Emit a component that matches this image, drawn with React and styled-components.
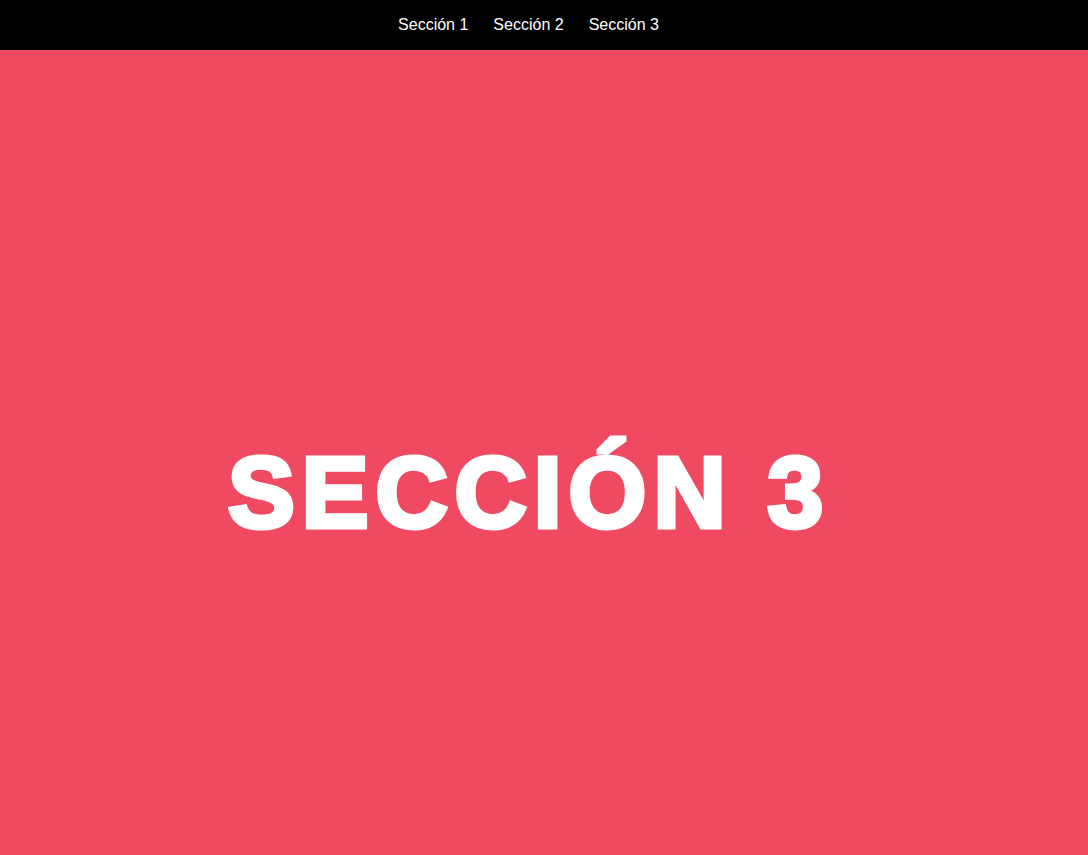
import React from 'react'
import styled, { createGlobalStyle } from 'styled-components'

const GlobalStyle = createGlobalStyle`
  html, body {
    margin: 0;
    padding: 0;
    font-family: "Liberation Sans", Arial, sans-serif;
    overflow: hidden;
  }
`

const Page = styled.div`
  display: flex;
  flex-direction: column;
  height: 100vh;
  background-color: #f04a62;
`

const Header = styled.nav`
  height: 50px;
  flex-shrink: 0;
  background-color: #000;
  display: flex;
  justify-content: center;
  align-items: center;
  padding-right: 31px;
`

const NavLink = styled.a`
  color: #fff;
  font-size: 16px;
  text-decoration: none;
  padding: 0 12.5px;
  cursor: pointer;
`

const Section = styled.section`
  flex: 1;
  display: flex;
  justify-content: center;
  align-items: center;
  padding-top: 79px;
  padding-right: 30px;
`

const Title = styled.h1`
  margin: 0;
  color: #fff;
  font-size: 100px;
  font-weight: 700;
  letter-spacing: 7px;
  -webkit-text-stroke: 5px #fff;
  text-shadow: 0 0 3px rgba(90, 0, 20, 0.25);
`

export default function App() {
  const links = ['Sección 1', 'Sección 2', 'Sección 3']
  return (
    <Page>
      <GlobalStyle />
      <Header>
        {links.map((l) => (
          <NavLink key={l}>{l}</NavLink>
        ))}
      </Header>
      <Section>
        <Title>SECCIÓN 3</Title>
      </Section>
    </Page>
  )
}
